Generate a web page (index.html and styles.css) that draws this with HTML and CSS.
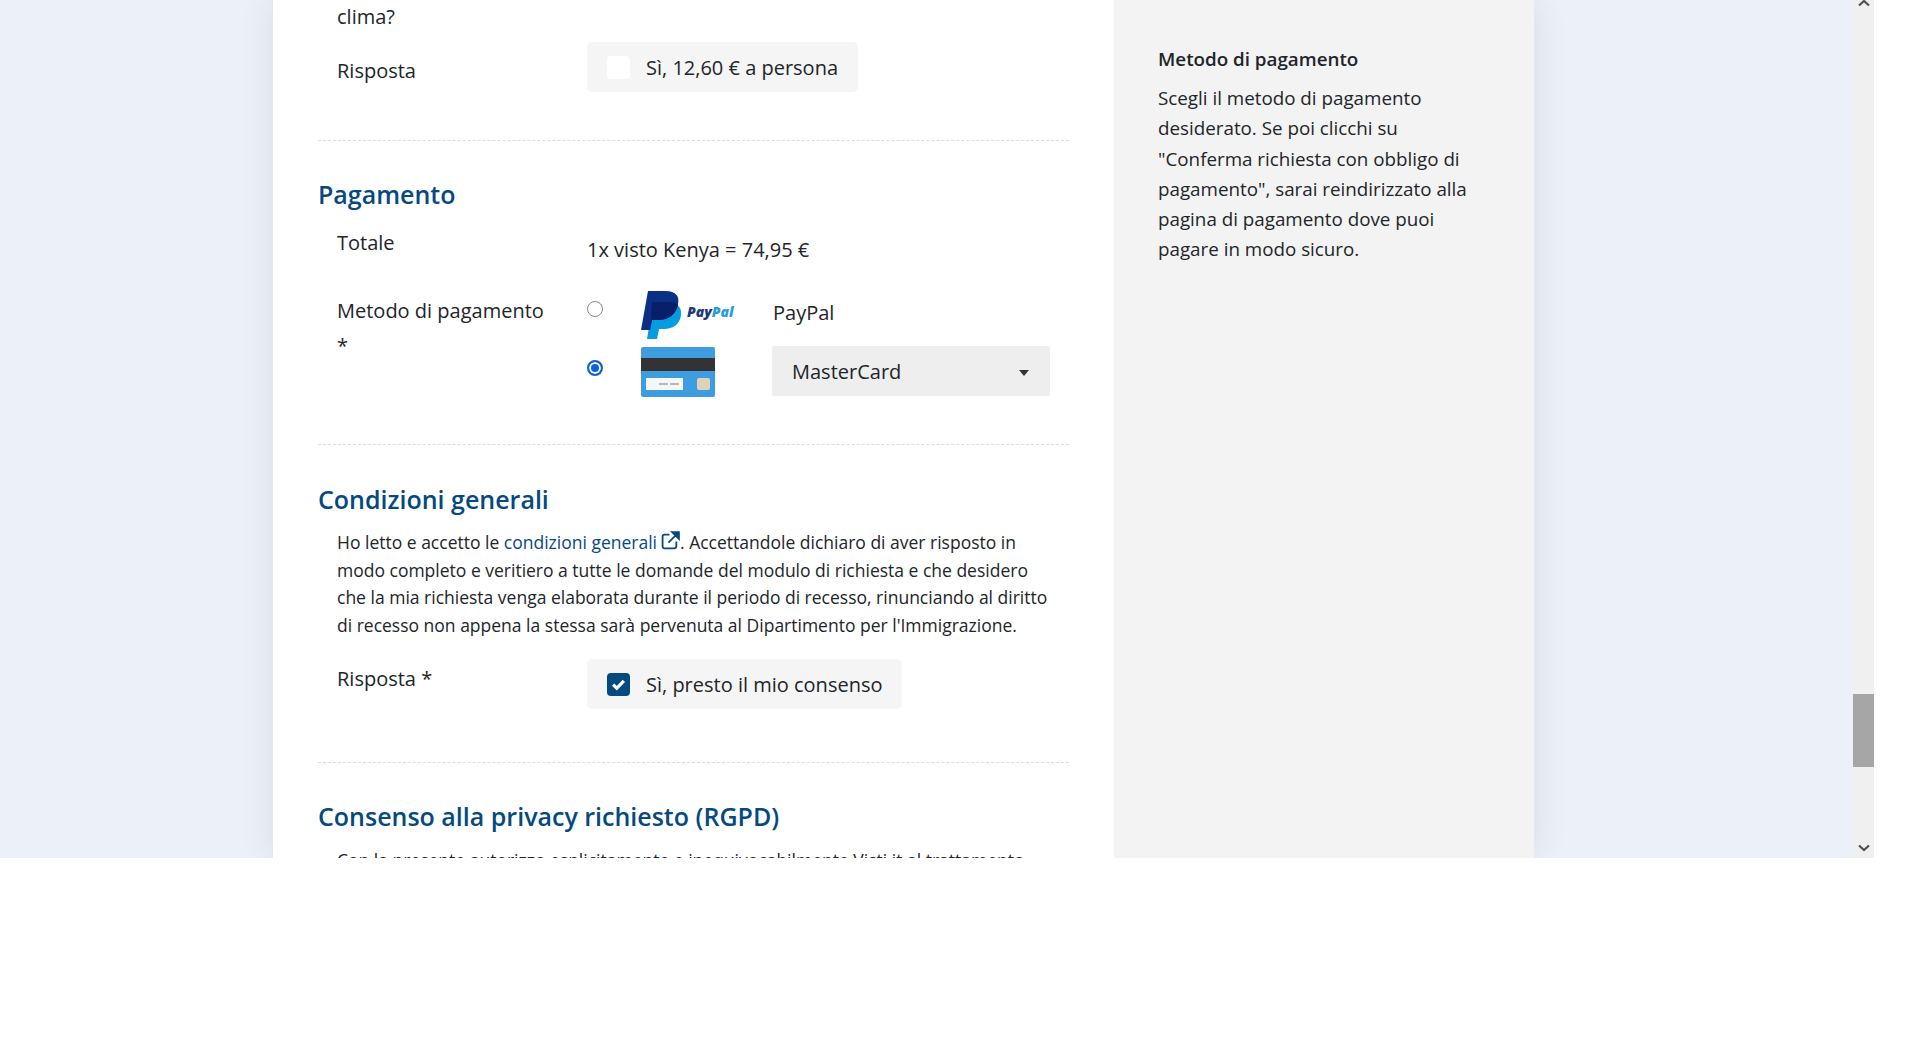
FILE: index.html
```html
<!DOCTYPE html>
<html lang="it">
<head>
<meta charset="utf-8">
<title>Richiesta visto Kenya</title>
<link rel="stylesheet" href="styles.css">
</head>
<body>
<div class="viewport">
  <div class="page">
    <div class="card">
      <main class="form">
        <section class="sec sec-first">
          <div class="row row-q">
            <div class="label">clima?</div>
          </div>
          <div class="row row-a">
            <div class="label label-risposta">Risposta</div>
            <label class="choice"><span class="box"></span><span>Sì, 12,60 € a persona</span></label>
          </div>
        </section>

        <section class="sec sec-pay">
          <h2>Pagamento</h2>
          <div class="row row-total">
            <div class="label">Totale</div>
            <div class="value">1x visto Kenya = 74,95 €</div>
          </div>
          <div class="row row-method">
            <div class="label label-method">Metodo di pagamento *</div>
            <div class="methods">
              <div class="method method-paypal">
                <span class="radio"></span>
                <svg class="logo-paypal" viewBox="0 0 94 48" aria-hidden="true">
                  <path d="M12 12h17c7 0 12 4 11 12-1 9-8 14-17 14h-5l-2 10H6z" fill="#069ce0"/>
                  <path d="M7 0h18c9 0 14 5 12 13-2 10-9 16-20 16h-6l-2 10H0z" fill="#0c2f86"/>
                  <path d="M11 11h17c4 0 8 1 9 3-2 9-9 15-20 15h-6l-2 10z" fill="#0a1f6b"/>
                  <text class="pp-word" x="46" y="26"><tspan fill="#1c3a78">Pay</tspan><tspan fill="#2a9bd8">Pal</tspan></text>
                </svg>
                <span class="method-name">PayPal</span>
              </div>
              <div class="method method-card">
                <span class="radio radio-on"></span>
                <svg class="logo-card" viewBox="0 0 74 50" aria-hidden="true">
                  <rect width="74" height="50" rx="2" fill="#3d9ddf"/>
                  <rect y="11" width="74" height="13" fill="#333234"/>
                  <rect x="5" y="31" width="37" height="12" fill="#f4f6f8"/>
                  <rect x="18" y="36" width="9" height="2" fill="#b5bac0"/>
                  <rect x="29" y="36" width="9" height="2" fill="#b5bac0"/>
                  <rect x="56" y="31" width="13" height="12" rx="2" fill="#dcd3b8"/>
                </svg>
                <div class="select"><span>MasterCard</span><span class="caret"></span></div>
              </div>
            </div>
          </div>
        </section>

        <section class="sec sec-terms">
          <h2>Condizioni generali</h2>
          <p class="para">Ho letto e accetto le <a class="link" href="#">condizioni generali<svg class="ext" viewBox="0 0 18 18" aria-hidden="true"><path d="M8 3.5H3.5a2 2 0 0 0-2 2v9a2 2 0 0 0 2 2h9a2 2 0 0 0 2-2V10" fill="none" stroke="#05497f" stroke-width="1.7"/><path d="M7 11 16 2M10.5 1H17v6.5z" fill="#05497f" stroke="#05497f" stroke-width="1.7"/></svg></a>. Accettandole dichiaro di aver risposto in modo completo e veritiero a tutte le domande del modulo di richiesta e che desidero che la mia richiesta venga elaborata durante il periodo di recesso, rinunciando al diritto di recesso non appena la stessa sarà pervenuta al Dipartimento per l'Immigrazione.</p>
          <div class="row row-consent">
            <div class="label">Risposta *</div>
            <label class="choice"><span class="box box-on"><svg viewBox="0 0 14 12" aria-hidden="true"><path d="M2 6.2 5.4 9.5 12 2.6" fill="none" stroke="#fff" stroke-width="3"/></svg></span><span>Sì, presto il mio consenso</span></label>
          </div>
        </section>

        <section class="sec sec-privacy">
          <h2>Consenso alla privacy richiesto (RGPD)</h2>
          <p class="para">Con la presente autorizzo esplicitamente e inequivocabilmente Visti.it al trattamento</p>
        </section>
      </main>
      <aside class="side">
        <h3>Metodo di pagamento</h3>
        <p>Scegli il metodo di pagamento desiderato. Se poi clicchi su "Conferma richiesta con obbligo di pagamento", sarai reindirizzato alla pagina di pagamento dove puoi pagare in modo sicuro.</p>
      </aside>
    </div>
  </div>
  <div class="scrollbar">
    <svg class="arrow arrow-up" viewBox="0 0 12 8" aria-hidden="true"><path d="M1 6.5 6 2l5 4.5" fill="none" stroke="#505050" stroke-width="2.2"/></svg>
    <div class="thumb"></div>
    <svg class="arrow arrow-down" viewBox="0 0 12 8" aria-hidden="true"><path d="M1 1.5 6 6l5-4.5" fill="none" stroke="#505050" stroke-width="2.2"/></svg>
  </div>
</div>
</body>
</html>
```
FILE: styles.css
```css
* { box-sizing: border-box; }
html, body { margin: 0; padding: 0; background: #fff; }
body { font-family: "Open Sans", "Liberation Sans", sans-serif; color: #212529; font-size: 20px; }

.viewport { display: flex; width: 1874px; height: 858px; overflow: hidden; background: #ecf0f8; }
.page { flex: 1; display: flex; padding-left: 273px; overflow: hidden; }
.card { display: flex; width: 1261px; height: 858px; background: #fff; box-shadow: 0 0 32px rgba(40, 60, 90, .11); }

.form { width: 841px; padding: 2px 45px 0 45px; overflow: hidden; }
.side { width: 420px; background: #f3f3f3; padding: 47px 60px 0 44px; }
.side h3 { margin: 0 0 12px; font-size: 18.8px; line-height: 24px; font-weight: 600; color: #212529; }
.side p { margin: 0; font-size: 18.8px; line-height: 30.3px; }

.sec { border-bottom: 1px dashed #ddd; }
.sec-first { height: 139px; }
.sec-pay { height: 304px; }
.sec-terms { height: 318px; }
.sec-privacy { border-bottom: 0; }

h2 { margin: 0; font-size: 25px; line-height: 34px; font-weight: 600; color: #05497f; }
.sec-pay h2 { padding-top: 36px; }
.sec-terms h2 { padding-top: 37px; }
.sec-privacy h2 { padding-top: 36px; }

.row { display: flex; padding-left: 19px; }
.label { width: 250px; line-height: 30px; flex: none; }
.row-a { margin-top: 10px; }
.label-risposta { padding-top: 14px; }

.choice { display: flex; align-items: center; gap: 16px; height: 50px; padding: 0 20px; background: #f5f5f5; border-radius: 5px; }
.box { display: flex; align-items: center; justify-content: center; width: 23px; height: 23px; background: #fff; border-radius: 4px; flex: none; }
.box-on { background: #05497f; }
.box-on svg { width: 15px; height: 13px; }

.row-total { margin-top: 17px; }
.value { line-height: 30px; padding-top: 7px; }
.row-method { margin-top: 20px; }
.label-method { padding-top: 8px; line-height: 35px; padding-right: 35px; }
.methods { display: flex; flex-direction: column; gap: 9px; padding-top: 5px; }
.method { display: flex; align-items: center; position: relative; }
.method-paypal { height: 47px; }
.method-card { height: 50px; }
.radio { width: 16px; height: 16px; margin-right: 38px; border: 1.5px solid #8a8a8a; border-radius: 50%; background: #fff; flex: none; margin-top: -9px; }
.radio-on { border: 2px solid #0f62d6; background: #0f62d6; box-shadow: inset 0 0 0 2px #fff; margin-top: -7px; }
.logo-paypal { width: 94px; height: 48px; margin-right: 38px; margin-top: 2px; flex: none; }
.logo-card { width: 74px; height: 50px; margin-right: 57px; margin-top: 1px; flex: none; }
.pp-word { font: italic 800 14px "Open Sans", sans-serif; }
.method-name { line-height: 30px; margin-top: -2px; }
.select { display: flex; align-items: center; justify-content: space-between; width: 278px; height: 50px; padding: 0 21px 0 20px; background: #eee; border-radius: 2px; }
.caret { width: 0; height: 0; border: 5.5px solid transparent; border-top: 6px solid #333; border-bottom: 0; margin-top: 3px; }

.para { margin: 13px 0 0; padding: 0 10px 0 19px; font-size: 17.5px; line-height: 27.5px; }
.link { color: #05497f; text-decoration: none; }
.ext { width: 19px; height: 19px; margin-left: 4px; vertical-align: -1px; }
.row-consent { margin-top: 20px; }
.row-consent .label { line-height: 30px; padding-top: 5px; }
.sec-privacy .para { margin-top: 14px; white-space: nowrap; }

.scrollbar { display: flex; flex-direction: column; align-items: center; width: 21px; height: 858px; background: #f0f0f0; flex: none; }
.arrow { width: 12px; height: 8px; flex: none; }
.arrow-up { margin-top: -1px; }
.thumb { width: 21px; height: 73px; background: #a6a6a6; margin-top: 687px; }
.arrow-down { margin-top: 77px; }
```
